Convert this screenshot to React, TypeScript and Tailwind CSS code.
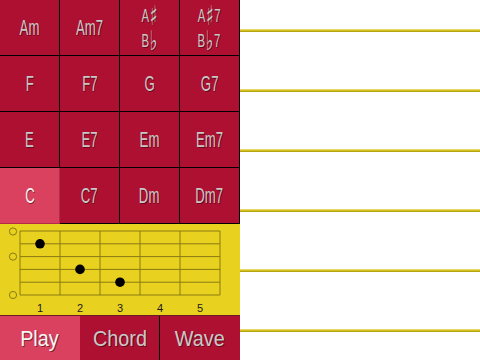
import React from 'react';

type Cell = { top: string; bottom?: string };

const chords: Cell[] = [
  { top: 'Am' },
  { top: 'Am7' },
  { top: 'A♯', bottom: 'B♭' },
  { top: 'A♯7', bottom: 'B♭7' },
  { top: 'F' },
  { top: 'F7' },
  { top: 'G' },
  { top: 'G7' },
  { top: 'E' },
  { top: 'E7' },
  { top: 'Em' },
  { top: 'Em7' },
  { top: 'C' },
  { top: 'C7' },
  { top: 'Dm' },
  { top: 'Dm7' },
];

const selected = 'C';

// string y positions on the fretboard svg
const strings = [7, 19.8, 32.6, 45.4, 58.2, 71];
const frets = [20, 60, 100, 140, 180, 220];

const shadow = '[text-shadow:1px_1px_0_rgba(40,0,0,0.5)]';

// make the accidental glyphs as tall as the letters
function Label({ text }: { text: string }) {
  const parts = text.split(/([♯♭])/);
  return (
    <span className={'flex items-end h-[20px] scale-x-[0.6] ' + shadow}>
      {parts.map((p, i) =>
        p === '♯' || p === '♭' ? (
          <span key={i} className="text-[27px] leading-[21px] mx-[1px] font-['DejaVu_Sans',sans-serif]">
            {p}
          </span>
        ) : (
          <span key={i} className="leading-[20px]">
            {p}
          </span>
        ),
      )}
    </span>
  );
}

function ChordCell({ cell }: { cell: Cell }) {
  const active = cell.top === selected;
  return (
    <div
      className={
        'flex flex-col items-center justify-center border-r border-b ' +
        (active
          ? 'bg-[#d9415f] border-[#b32c48] text-[#f4f4f4]'
          : 'bg-[#ad1031] border-black text-[#c8c8c8]')
      }
    >
      {cell.bottom ? (
        <div className="flex flex-col items-center gap-[5px] pt-[2px] text-[19px]">
          <Label text={cell.top} />
          <Label text={cell.bottom} />
        </div>
      ) : (
        <span className={'text-[22px] leading-none scale-x-[0.6] ' + shadow}>{cell.top}</span>
      )}
    </div>
  );
}

function Fretboard() {
  const line = '#8a7a12';
  return (
    <div className="h-[91px] bg-[#e9d21f]">
      <svg width="240" height="91" viewBox="0 0 240 91">
        {strings.map((y) => (
          <line key={y} x1={20} x2={220} y1={y} y2={y} stroke={line} strokeWidth={1} />
        ))}
        {frets.map((x) => (
          <line key={x} x1={x} x2={x} y1={7} y2={71} stroke={line} strokeWidth={1} />
        ))}
        {[7.5, 32.6, 71].map((y) => (
          <circle key={y} cx={13} cy={y} r={3.6} fill="none" stroke={line} strokeWidth={1} />
        ))}
        <circle cx={40} cy={19.8} r={4.8} fill="#000" />
        <circle cx={80} cy={45.4} r={4.8} fill="#000" />
        <circle cx={120} cy={58.2} r={4.8} fill="#000" />
        {[1, 2, 3, 4, 5].map((n) => (
          <text
            key={n}
            x={n * 40}
            y={88}
            textAnchor="middle"
            fontSize={11}
            fontFamily="'Liberation Sans', Arial, sans-serif"
            fill="#1a1a1a"
          >
            {n}
          </text>
        ))}
      </svg>
    </div>
  );
}

function TabButton({ label, active, last }: { label: string; active?: boolean; last?: boolean }) {
  return (
    <div
      className={
        'flex-1 flex items-center justify-center text-[22px] ' +
        (active ? 'bg-[#d9415f] text-[#f6f6f6]' : 'bg-[#ad1031] text-[#c8c8c8]') +
        (last ? ' border-l border-black' : '')
      }
    >
      <span className={'scale-x-90 ' + shadow}>{label}</span>
    </div>
  );
}

export default function App() {
  return (
    <div className="w-[480px] h-[360px] flex bg-white font-['Liberation_Sans',Arial,sans-serif] overflow-hidden">
      <div className="w-[240px] flex flex-col">
        <div className="grid grid-cols-4 grid-rows-4 h-[224px]">
          {chords.map((c) => (
            <ChordCell key={c.top} cell={c} />
          ))}
        </div>
        <Fretboard />
        <div className="flex h-[45px] border-t border-[#6e1a22]">
          <TabButton label="Play" active />
          <TabButton label="Chord" />
          <TabButton label="Wave" last />
        </div>
      </div>
      <div className="flex-1 flex flex-col pt-[29px] gap-[57px]">
        {[0, 1, 2, 3, 4, 5].map((i) => (
          <div key={i} className="h-[3px] bg-linear-to-b from-[#f0e484] via-[#d3c11c] to-[#a6980e]" />
        ))}
      </div>
    </div>
  );
}
